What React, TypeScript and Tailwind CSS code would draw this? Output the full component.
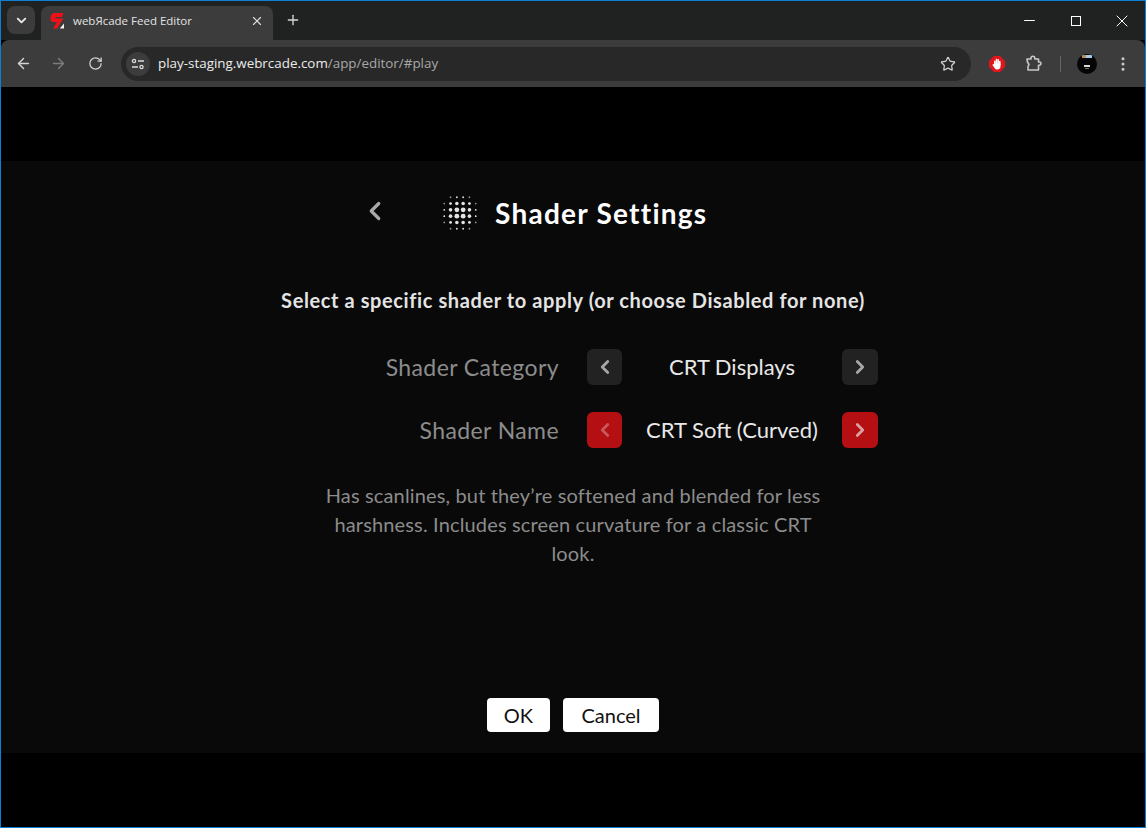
import React from 'react';
import { ChevronDown, X, Plus, ArrowLeft, ArrowRight, RotateCw, Star, EllipsisVertical, ChevronLeft, ChevronRight, Minus } from 'lucide-react';

function Logo() {
  return (
    <svg width="14" height="16" viewBox="0 0 14 16" className="ml-[-1px]">
      <path d="M3 0H13.5L12 4H6.2L5 5.5H13.5L10 10.5L7.2 15.5H3.2L7 9H2L0.5 7V3z" fill="#ee1218" />
      <path d="M14 10.5V15.5H9.8z" fill="#f2f2f2" />
    </svg>
  );
}

function ShaderDots() {
  const dots: React.ReactElement[] = [];
  const pos = [-2.5, -1.5, -0.5, 0.5, 1.5, 2.5];
  for (const y of pos) {
    for (const x of pos) {
      const d = Math.sqrt(x * x + y * y);
      if (d > 3) continue;
      const r = d < 1 ? 2.4 : d < 1.8 ? 1.8 : d < 2.4 ? 1.4 : 0.9;
      dots.push(<circle key={x + '_' + y} cx={17 + x * 6.3} cy={17 + y * 6.3} r={r} fill={d < 2.7 ? '#e4e4e4' : '#8c8c8c'} />);
    }
  }
  return <svg width="34" height="34" viewBox="0 0 34 34">{dots}</svg>;
}

function Arrow({ dir, red, dim }: { dir: 'left' | 'right'; red?: boolean; dim?: boolean }) {
  const Icon = dir === 'left' ? ChevronLeft : ChevronRight;
  return (
    <div className={`flex h-9 items-center justify-center rounded-md ${dir === 'left' ? 'w-[35px]' : 'w-9'} ${red ? 'bg-[#b40f12]' : 'bg-[#222222]'}`}>
      <Icon size={22} strokeWidth={3} className={dim ? 'text-[#c9585a]' : red ? 'text-[#dca0a0]' : 'text-[#a8a8a8]'} />
    </div>
  );
}

function Row({ label, value, red }: { label: string; value: string; red?: boolean }) {
  return (
    <div className="flex w-[610px] items-center">
      <div className="w-[291px] text-right text-[23px] leading-9 tracking-[0.4px] text-[#8c8c8c]">{label}</div>
      <div className="ml-7"><Arrow dir="left" red={red} dim={red} /></div>
      <div className="w-[220px] text-center text-[22px] leading-9 text-[#e8e8e8]">{value}</div>
      <Arrow dir="right" red={red} />
    </div>
  );
}

export default function App() {
  return (
    <div className="flex h-[828px] w-[1146px] flex-col overflow-hidden border border-[#0c7fd6] bg-black font-['Lato',sans-serif]">
      {/* title bar */}
      <div className="flex h-[39px] shrink-0 items-end bg-[#202222] font-['Open_Sans',sans-serif]">
        <div className="mb-[6px] ml-1.5 flex h-7 w-7 items-center justify-center rounded-lg bg-[#3c3c3c] text-[#e8e8e8]">
          <ChevronDown size={15} strokeWidth={3} />
        </div>
        <div className="ml-1.5 flex h-[34px] w-[232px] items-center rounded-t-lg bg-[#3c3c3c] pb-1 pl-2.5 pr-2.5">
          <Logo />
          <span className="ml-[9px] flex-1 text-[11.5px] text-[#e3e3e3]">webЯcade Feed Editor</span>
          <X size={14} strokeWidth={2} className="mr-[-1px] text-[#e0e0e0]" />
        </div>
        <div className="mb-[6px] ml-1.5 flex h-7 w-7 items-center justify-center text-[#d8d8d8]">
          <Plus size={16} strokeWidth={2} />
        </div>
        <div className="flex-1" />
        <div className="flex h-full items-center text-white">
          <div className="flex w-[47px] justify-center"><Minus size={17} strokeWidth={1.4} /></div>
          <div className="flex w-[45px] justify-center"><div className="h-2.5 w-2.5 border border-white" /></div>
          <div className="flex w-[47px] justify-center"><X size={20} strokeWidth={1.2} /></div>
        </div>
      </div>
      {/* toolbar */}
      <div className="flex h-[47px] shrink-0 items-center rounded-tl-lg rounded-tr-lg bg-[#3c3c3c] pl-[14px] pr-3 font-['Open_Sans',sans-serif]">
        <ArrowLeft size={17} strokeWidth={2} className="text-[#d4d4d4]" />
        <ArrowRight size={17} strokeWidth={2} className="ml-[18px] text-[#7c7c7c]" />
        <RotateCw size={15} strokeWidth={2} className="ml-[21px] text-[#d4d4d4]" />
        <div className="ml-[18px] flex h-[34px] w-[850px] items-center rounded-full bg-[#282828] pl-[5px] pr-[15px]">
          <div className="flex h-6 w-6 items-center justify-center rounded-full bg-[#3c3c3c]">
            <svg width="14" height="12" viewBox="0 0 14 12" fill="none" stroke="#dcdcdc" strokeWidth="1.3">
              <circle cx="3" cy="3" r="1.6" />
              <path d="M7 3h6M1 9h6" />
              <circle cx="10.5" cy="9" r="1.6" />
            </svg>
          </div>
          <span className="ml-[8px] flex-1 text-[13.4px] text-[#a8a8a8]"><span className="text-[#ececec]">play-staging.webrcade.com</span>/app/editor/#play</span>
          <Star size={16} strokeWidth={1.8} className="text-[#d4d4d4]" />
        </div>
        <svg width="16" height="16" viewBox="0 0 16 16" className="ml-[18px]">
          <path d="M5 0H11L16 5V11L11 16H5L0 11V5z" fill="#e2141c" />
          <path d="M5.8 8V5.2M7.5 8V3.6M9.2 8V3.8M10.8 8.5V5.4" stroke="#fff" strokeWidth="1.5" strokeLinecap="round" fill="none" />
          <path d="M5 7.5H11.5V10.5C11.5 12.4 10 13.4 8.6 13.4H7.6C6.4 13.4 5.8 12.6 5.2 11.6L3.6 9.2C3.3 8.6 4.1 8 4.6 8.5z" fill="#fff" />
        </svg>
        <svg width="17" height="17" viewBox="0 0 17 17" fill="none" stroke="#c8c8c8" strokeWidth="1.6" strokeLinejoin="round" className="ml-[20px]">
          <path d="M2 4H6V3.2A1.9 1.9 0 0 1 9.8 3.2V4H13.5V7H14.4A1.6 1.6 0 0 1 14.4 10.2H13.5V15H3V11.5L4 9.5L2.5 7z" />
        </svg>
        <div className="ml-[18px] h-4 w-px bg-[#666666]" />
        <svg width="20" height="20" viewBox="0 0 20 20" className="ml-4">
          <defs>
            <clipPath id="avatarClip"><circle cx="10" cy="10" r="10" /></clipPath>
          </defs>
          <circle cx="10" cy="10" r="10" fill="#050505" />
          <g clipPath="url(#avatarClip)">
            <rect x="5" y="1" width="4" height="3" fill="#b89060" />
            <rect x="9" y="1" width="6" height="3" fill="#a8c8e8" />
            <rect x="7" y="11" width="6" height="2" fill="#d8d8d8" />
            <rect x="8" y="14" width="4" height="1" fill="#807050" />
          </g>
        </svg>
        <EllipsisVertical size={18} strokeWidth={2.2} className="ml-[17px] text-[#c8c8c8]" />
      </div>
      {/* page */}
      <div className="flex flex-1 flex-col bg-black pt-[74px]">
        <div className="flex h-[592px] flex-col items-center bg-[#090909]">
          <div className="mt-[34px] flex h-9 w-[610px] items-center pl-[92px]">
            <ChevronLeft size={30} strokeWidth={2.6} className="mb-1 text-[#a8a8a8]" />
            <div className="ml-[53px]"><ShaderDots /></div>
            <h1 className="ml-[18px] text-[28px] font-bold tracking-[1.25px] text-white">Shader Settings</h1>
          </div>
          <p className="mt-[55px] text-[20px] font-bold leading-7 tracking-[0.6px] text-[#e4e4e4]">Select a specific shader to apply (or choose Disabled for none)</p>
          <div className="mt-[35px] flex flex-col gap-[27px]">
            <Row label="Shader Category" value="CRT Displays" />
            <Row label="Shader Name" value="CRT Soft (Curved)" red />
          </div>
          <p className="mt-[33px] w-[510px] text-center text-[20px] leading-[29px] tracking-[0.15px] text-[#8c8c8c]">
            Has scanlines, but they’re softened and blended for less harshness. Includes screen curvature for a classic CRT look.
          </p>
          <div className="mt-[130px] flex gap-[13px]">
            <button className="flex h-[34px] w-[63px] items-center justify-center rounded bg-white text-[20px] text-[#111111]">OK</button>
            <button className="flex h-[34px] w-24 items-center justify-center rounded bg-white text-[20px] text-[#111111]">Cancel</button>
          </div>
        </div>
      </div>
    </div>
  );
}
